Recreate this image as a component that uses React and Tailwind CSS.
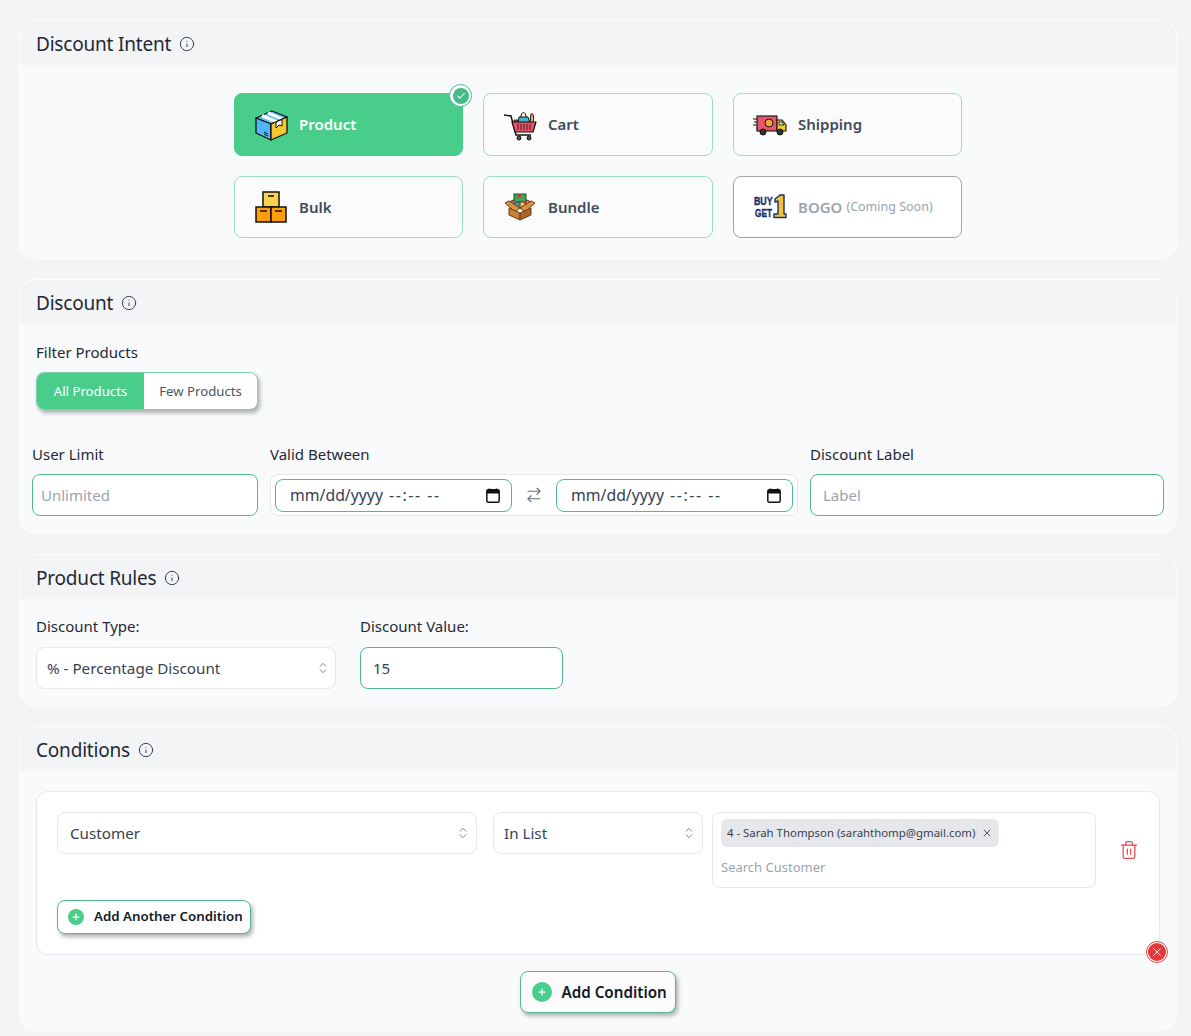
import { Info, ChevronsUpDown, ArrowRightLeft, Trash2, X, Check, Plus } from "lucide-react";

const ProductIcon = () => (
   <svg width="34" height="32" viewBox="0 0 34 32">
      <path d="M2 9 L18 2 L33 8 L17 15 Z" fill="#5bc4f5" stroke="#111" strokeWidth="1.3" strokeLinejoin="round" />
      <path d="M8 6.5 L23 13 M14 3.8 L28 10" stroke="#fff" strokeWidth="3" />
      <path d="M2 9 L17 15 L17 31 L2 24 Z" fill="#4db8f5" stroke="#111" strokeWidth="1.3" strokeLinejoin="round" />
      <path d="M17 15 L33 8 L33 24 L17 31 Z" fill="#f2c82e" stroke="#111" strokeWidth="1.3" strokeLinejoin="round" />
      <path d="M22 13 L28 10.500 L28 17 L25 16 L22 19 Z" fill="#fff" stroke="#111" strokeWidth="1" />
      <path d="M10 23 L14 25 M10 25 L14 27" stroke="#111" strokeWidth="1" />
   </svg>
);

const CartIcon = () => (
   <svg width="34" height="32" viewBox="0 0 34 32">
      <path d="M1 6 L8 7 L13 26 L28 26" fill="none" stroke="#111" strokeWidth="1.4" />
      <path d="M16 8 H25 L27 14 H15 Z" fill="#3fb6c9" stroke="#111" strokeWidth="1" />
      <path d="M18 8 C18 2 23 2 23 8" fill="none" stroke="#111" strokeWidth="1" />
      <path d="M28 5 C31 4 31 8 30 14 H27 Z" fill="#e8b98a" stroke="#111" strokeWidth="1" />
      <path d="M11 11 H15 V14 H11 Z" fill="#a8552e" stroke="#111" strokeWidth="0.8" />
      <path d="M9 13 H33 L30 23 H12 Z" fill="#e9546b" stroke="#111" strokeWidth="1.2" strokeLinejoin="round" />
      <path d="M15 15 V21 M18 15 V21 M21 15 V21 M24 15 V21 M27 15 V21" stroke="#111" strokeWidth="0.8" />
      <circle cx="16" cy="29" r="2" fill="#555" stroke="#111" />
      <circle cx="26" cy="29" r="2" fill="#555" stroke="#111" />
   </svg>
);

const TruckIcon = () => (
   <svg width="34" height="22" viewBox="0 0 34 22">
      <path d="M0 5 H8 M1 8 H8 M0 11 H8 M3 14 H8" stroke="#111" strokeWidth="1.2" />
      <rect x="4" y="2" width="20" height="15" fill="#e9546b" stroke="#111" strokeWidth="1.1" />
      <circle cx="16" cy="9" r="4" fill="#f2a33a" stroke="#111" strokeWidth="1" />
      <path d="M24 6 H29 L33 11 V17 H24 Z" fill="#f2c82e" stroke="#111" strokeWidth="1.1" />
      <path d="M26 8 H29 L31 11 H26 Z" fill="#cfe9f5" stroke="#111" strokeWidth="0.8" />
      <circle cx="10" cy="18" r="3" fill="#333" stroke="#111" />
      <circle cx="27" cy="18" r="3" fill="#333" stroke="#111" />
   </svg>
);

const BulkIcon = () => (
   <svg width="32" height="32" viewBox="0 0 32 32">
      <rect x="8" y="1" width="16" height="15" fill="#fbd44a" stroke="#111" strokeWidth="1.5" />
      <path d="M13 5 H19" stroke="#111" strokeWidth="1.6" />
      <rect x="1" y="16" width="15" height="15" fill="#ff9d0a" stroke="#111" strokeWidth="1.5" />
      <rect x="16" y="16" width="15" height="15" fill="#ff9d0a" stroke="#111" strokeWidth="1.5" />
      <path d="M5 20 H12 M20 20 H27" stroke="#111" strokeWidth="1.6" />
   </svg>
);

const BundleIcon = () => (
   <svg width="32" height="28" viewBox="0 0 32 28">
      <path d="M5 9 L16 4 L27 9 L16 15 Z" fill="#4b8ec2" stroke="#6b3f16" strokeWidth="1" />
      <path d="M16 5 L27 9 L16 15 Z" fill="#f2c85a" stroke="#6b3f16" strokeWidth="1" />
      <rect x="10" y="1" width="12" height="8" fill="#3ea650" stroke="#1c4d24" strokeWidth="1" />
      <rect x="14" y="1.500" width="3" height="3" fill="#c9374d" />
      <rect x="9" y="8" width="3" height="3" fill="#c9374d" />
      <rect x="20" y="8" width="3" height="3" fill="#c9374d" />
      <path d="M1 10 L5 8 L16 15 L11 19 Z M31 10 L27 8 L16 15 L21 19 Z" fill="#d99145" stroke="#6b3f16" strokeWidth="1" strokeLinejoin="round" />
      <path d="M5 15 L16 20 V27 L5 22 Z" fill="#c77f35" stroke="#6b3f16" strokeWidth="1" strokeLinejoin="round" />
      <path d="M27 15 L16 20 V27 L27 22 Z" fill="#a9652a" stroke="#6b3f16" strokeWidth="1" strokeLinejoin="round" />
   </svg>
);

// logo lettering stays real text
const BogoIcon = () => (
   <svg width="33" height="26" viewBox="0 0 33 26">
      <g fontFamily="Liberation Sans, sans-serif" fontWeight="700" fontSize="11" fill="#14306b" stroke="#14306b" strokeWidth="0.4">
         <text transform="translate(0 10.500) scale(0.8 1)">BUY</text>
         <text transform="translate(1 23.200) scale(0.75 1)">GET</text>
      </g>
      <path d="M21 5 L26 1 H30 V20 H32 V23.500 H20 V20 H24 V7 L21 8 Z" fill="#f2c23e" stroke="#14306b" strokeWidth="1.4" strokeLinejoin="round" />
   </svg>
);

const intents = [
   { name: "Product", icon: <ProductIcon />, active: true },
   { name: "Cart", icon: <CartIcon /> },
   { name: "Shipping", icon: <TruckIcon /> },
   { name: "Bulk", icon: <BulkIcon /> },
   { name: "Bundle", icon: <BundleIcon /> },
   { name: "BOGO", icon: <BogoIcon />, disabled: true },
];

function Card({ title, children, className = "" }) {
   return (
      <section className={`bg-[#f9fafb] border border-[#fbfcfc] rounded-2xl overflow-visible ${className}`}>
         <header className="h-[44px] pt-[2px] bg-[#f3f4f6] rounded-t-2xl flex items-center gap-2 pl-[16px]">
            <h2 className="text-[19px] tracking-[-0.2px] text-[#1f2937]">{title}</h2>
            <Info size={16} strokeWidth={1.5} className="text-[#374151]" />
         </header>
         {children}
      </section>
   );
}

function Select({ value, className = "" }) {
   return (
      <div className={`h-[42px] bg-white border border-[#e5e7eb] rounded-lg flex items-center justify-between text-[15.2px] text-[#374151] ${className}`}>
         <span>{value}</span>
         <ChevronsUpDown size={14} strokeWidth={1.5} className="text-[#6b7280]" />
      </div>
   );
}

function DateInput() {
   return (
      <div className="w-[237px] h-[33px] bg-white border border-[#4fb98f] rounded-lg pl-3.5 pr-[11px] flex items-center justify-between text-[15.8px] text-[#374151]">
         <span className="whitespace-pre pt-[1px]">
            mm/dd/yyyy <span className="ml-[2px] tracking-[1.6px]">--:-- --</span>
         </span>
         <svg width="14" height="15" viewBox="0 0 14 15">
            <rect x="0.800" y="1.800" width="12.400" height="12.400" rx="1.500" fill="none" stroke="#111" strokeWidth="1.500" />
            <rect x="1" y="2" width="12" height="3.500" fill="#111" />
            <path d="M3.500 0.500 V2 M10.500 0.500 V2" stroke="#111" strokeWidth="1.500" />
         </svg>
      </div>
   );
}

function PlusDot({ size }) {
   return (
      <span className={`rounded-full bg-[#48cd8b] flex items-center justify-center text-white ${size}`}>
         <Plus size={10} strokeWidth={3} />
      </span>
   );
}

export default function App() {
   return (
      <div className="min-h-[1036px] bg-[#f3f4f6] pt-5 pl-[19px] pr-[14px] flex flex-col font-['Noto_Sans',sans-serif]">
         {/* Intent */}
         <Card title="Discount Intent" className="h-[240px] mb-[19px]">
            <div className="grid grid-cols-[229px_230px_229px] grid-rows-[63px_62px] justify-center gap-x-5 gap-y-5 pt-[28px]">
               {intents.map((item) => (
                  <button
                     key={item.name}
                     className={`relative rounded-lg border flex items-center gap-[11px] pl-[19px] text-[15px] font-semibold ${
                        item.active
                           ? "bg-[#48cd8b] border-[#48cd8b] text-white"
                           : item.disabled
                             ? "bg-white border-[#a3a3a3] text-[#9ca3af]"
                             : "bg-[#fbfbfb] border-[#9adfc0] text-[#414b5a]"
                     }`}
                  >
                     <span className="w-[34px] flex justify-center">{item.icon}</span>
                     <span>{item.name}</span>
                     {item.disabled && (
                        <span className="-ml-[7px] text-[12.5px] font-normal">(Coming Soon)</span>
                     )}
                     {item.active && (
                        <span className="absolute -top-[10px] -right-[10px] w-[23px] h-[23px] rounded-full bg-white border border-[#48b98a] flex items-center justify-center">
                           <span className="w-4 h-4 rounded-full bg-[#48b98a] flex items-center justify-center text-white">
                              <Check size={10} strokeWidth={2.5} />
                           </span>
                        </span>
                     )}
                  </button>
               ))}
            </div>
         </Card>

         {/* Discount */}
         <Card title="Discount" className="h-[255px] mb-5">
            <div className="pt-[18px] pl-[16px] text-[#1f2937]">
               <label className="block leading-[20px] text-[15px]">Filter Products</label>
               <div className="mt-[10px] flex w-[222px] h-[38px] rounded-lg border border-[#7fd0ae] bg-white shadow-[2px_3px_4px_rgba(0,0,0,0.3)] overflow-hidden text-[13.2px]">
                  <span className="w-[107px] pt-[1px] bg-[#48cd8b] text-white flex items-center justify-center">All Products</span>
                  <span className="flex-1 pt-[1px] flex items-center justify-center text-[#4b5563]">Few Products</span>
               </div>
            </div>
            <div className="flex pl-3 pt-[34px] text-[15px] text-[#1f2937]">
               <div className="w-[226px]">
                  <label className="block leading-[20px] mb-[10px]">User Limit</label>
                  <input
                     placeholder="Unlimited"
                     className="w-full h-[42px] bg-white border border-[#4fb98f] rounded-lg px-2 text-[15px] outline-none placeholder:text-[#9ca3af]"
                  />
               </div>
               <div className="w-[528px] ml-3">
                  <label className="block leading-[20px] mb-[10px]">Valid Between</label>
                  <div className="h-[42px] bg-white border border-[#e5e7eb] rounded-lg flex items-center justify-between px-1">
                     <DateInput />
                     <ArrowRightLeft size={18} strokeWidth={1.5} className="text-[#6b7280]" />
                     <DateInput />
                  </div>
               </div>
               <div className="w-[354px] ml-3">
                  <label className="block leading-[20px] mb-[10px]">Discount Label</label>
                  <input
                     placeholder="Label"
                     className="w-full h-[42px] bg-white border border-[#4fb98f] rounded-lg px-3 text-[15px] outline-none placeholder:text-[#9ca3af]"
                  />
               </div>
            </div>
         </Card>

         {/* Product rules */}
         <Card title="Product Rules" className="h-[153px] mb-[19px]">
            <div className="flex pl-[16px] pt-[17px] gap-6 text-[15px] text-[#1f2937]">
               <div className="w-[300px]">
                  <label className="block leading-[20px] mb-[11px]">Discount Type:</label>
                  <Select value="% - Percentage Discount" className="pl-[10px] pr-[5px]" />
               </div>
               <div className="w-[203px]">
                  <label className="block leading-[20px] mb-[11px]">Discount Value:</label>
                  <input
                     defaultValue="15"
                     className="w-full h-[42px] bg-white border border-[#4fb98f] rounded-lg px-3 text-[15px] text-[#374151] outline-none"
                  />
               </div>
            </div>
         </Card>

         {/* Conditions */}
         <Card title="Conditions" className="h-[305px]">
            <div className="relative mt-[20px] ml-[16px] w-[1124px] h-[164px] bg-white border border-[#e5e7eb] rounded-xl pt-5 pl-5">
               <div className="flex items-start">
                  <Select value="Customer" className="w-[420px] pl-3 pr-[6px]" />
                  <Select value="In List" className="w-[210px] ml-4 pl-[10px] pr-[6px]" />
                  <div className="w-[384px] h-[76px] ml-[9px] border border-[#e5e7eb] rounded-lg px-2 pt-[6px]">
                     <span className="inline-flex items-center h-[28px] px-1.5 gap-1.5 bg-[#e5e7eb] rounded-md text-[11.4px] text-[#374151]">
                        4 - Sarah Thompson (sarahthomp@gmail.com)
                        <X size={12} className="text-[#4b5563]" />
                     </span>
                     <p className="mt-[11px] text-[13px] leading-[18px] text-[#9ca3af]">Search Customer</p>
                  </div>
                  <Trash2 size={20} strokeWidth={1.5} className="ml-[23px] mt-[28px] text-[#e5484d]" />
               </div>
               <button className="mt-3 flex items-center gap-2.5 w-[194px] h-[34px] pl-[10px] bg-white border border-[#4fb98f] rounded-lg shadow-[2px_3px_4px_rgba(0,0,0,0.3)] text-[13.3px] font-semibold text-[#111827]">
                  <PlusDot size="w-4 h-4" />
                  Add Another Condition
               </button>
               <span className="absolute -right-[9px] -bottom-[9px] w-[22px] h-[22px] rounded-full border border-[#e5484d] bg-white flex items-center justify-center">
                  <span className="w-[18px] h-[18px] rounded-full bg-[#e5383b] flex items-center justify-center text-white">
                     <X size={14} strokeWidth={1.5} />
                  </span>
               </span>
            </div>
            <div className="flex justify-center mt-4 pr-[1px]">
               <button className="flex items-center gap-2.5 w-[156px] h-[42px] pl-[11px] bg-[#fbfbfb] border border-[#4fb98f] rounded-lg shadow-[2px_3px_4px_rgba(0,0,0,0.3)] text-[15.2px] font-semibold text-[#111827]">
                  <PlusDot size="w-5 h-5" />
                  Add Condition
               </button>
            </div>
         </Card>
      </div>
   );
}
